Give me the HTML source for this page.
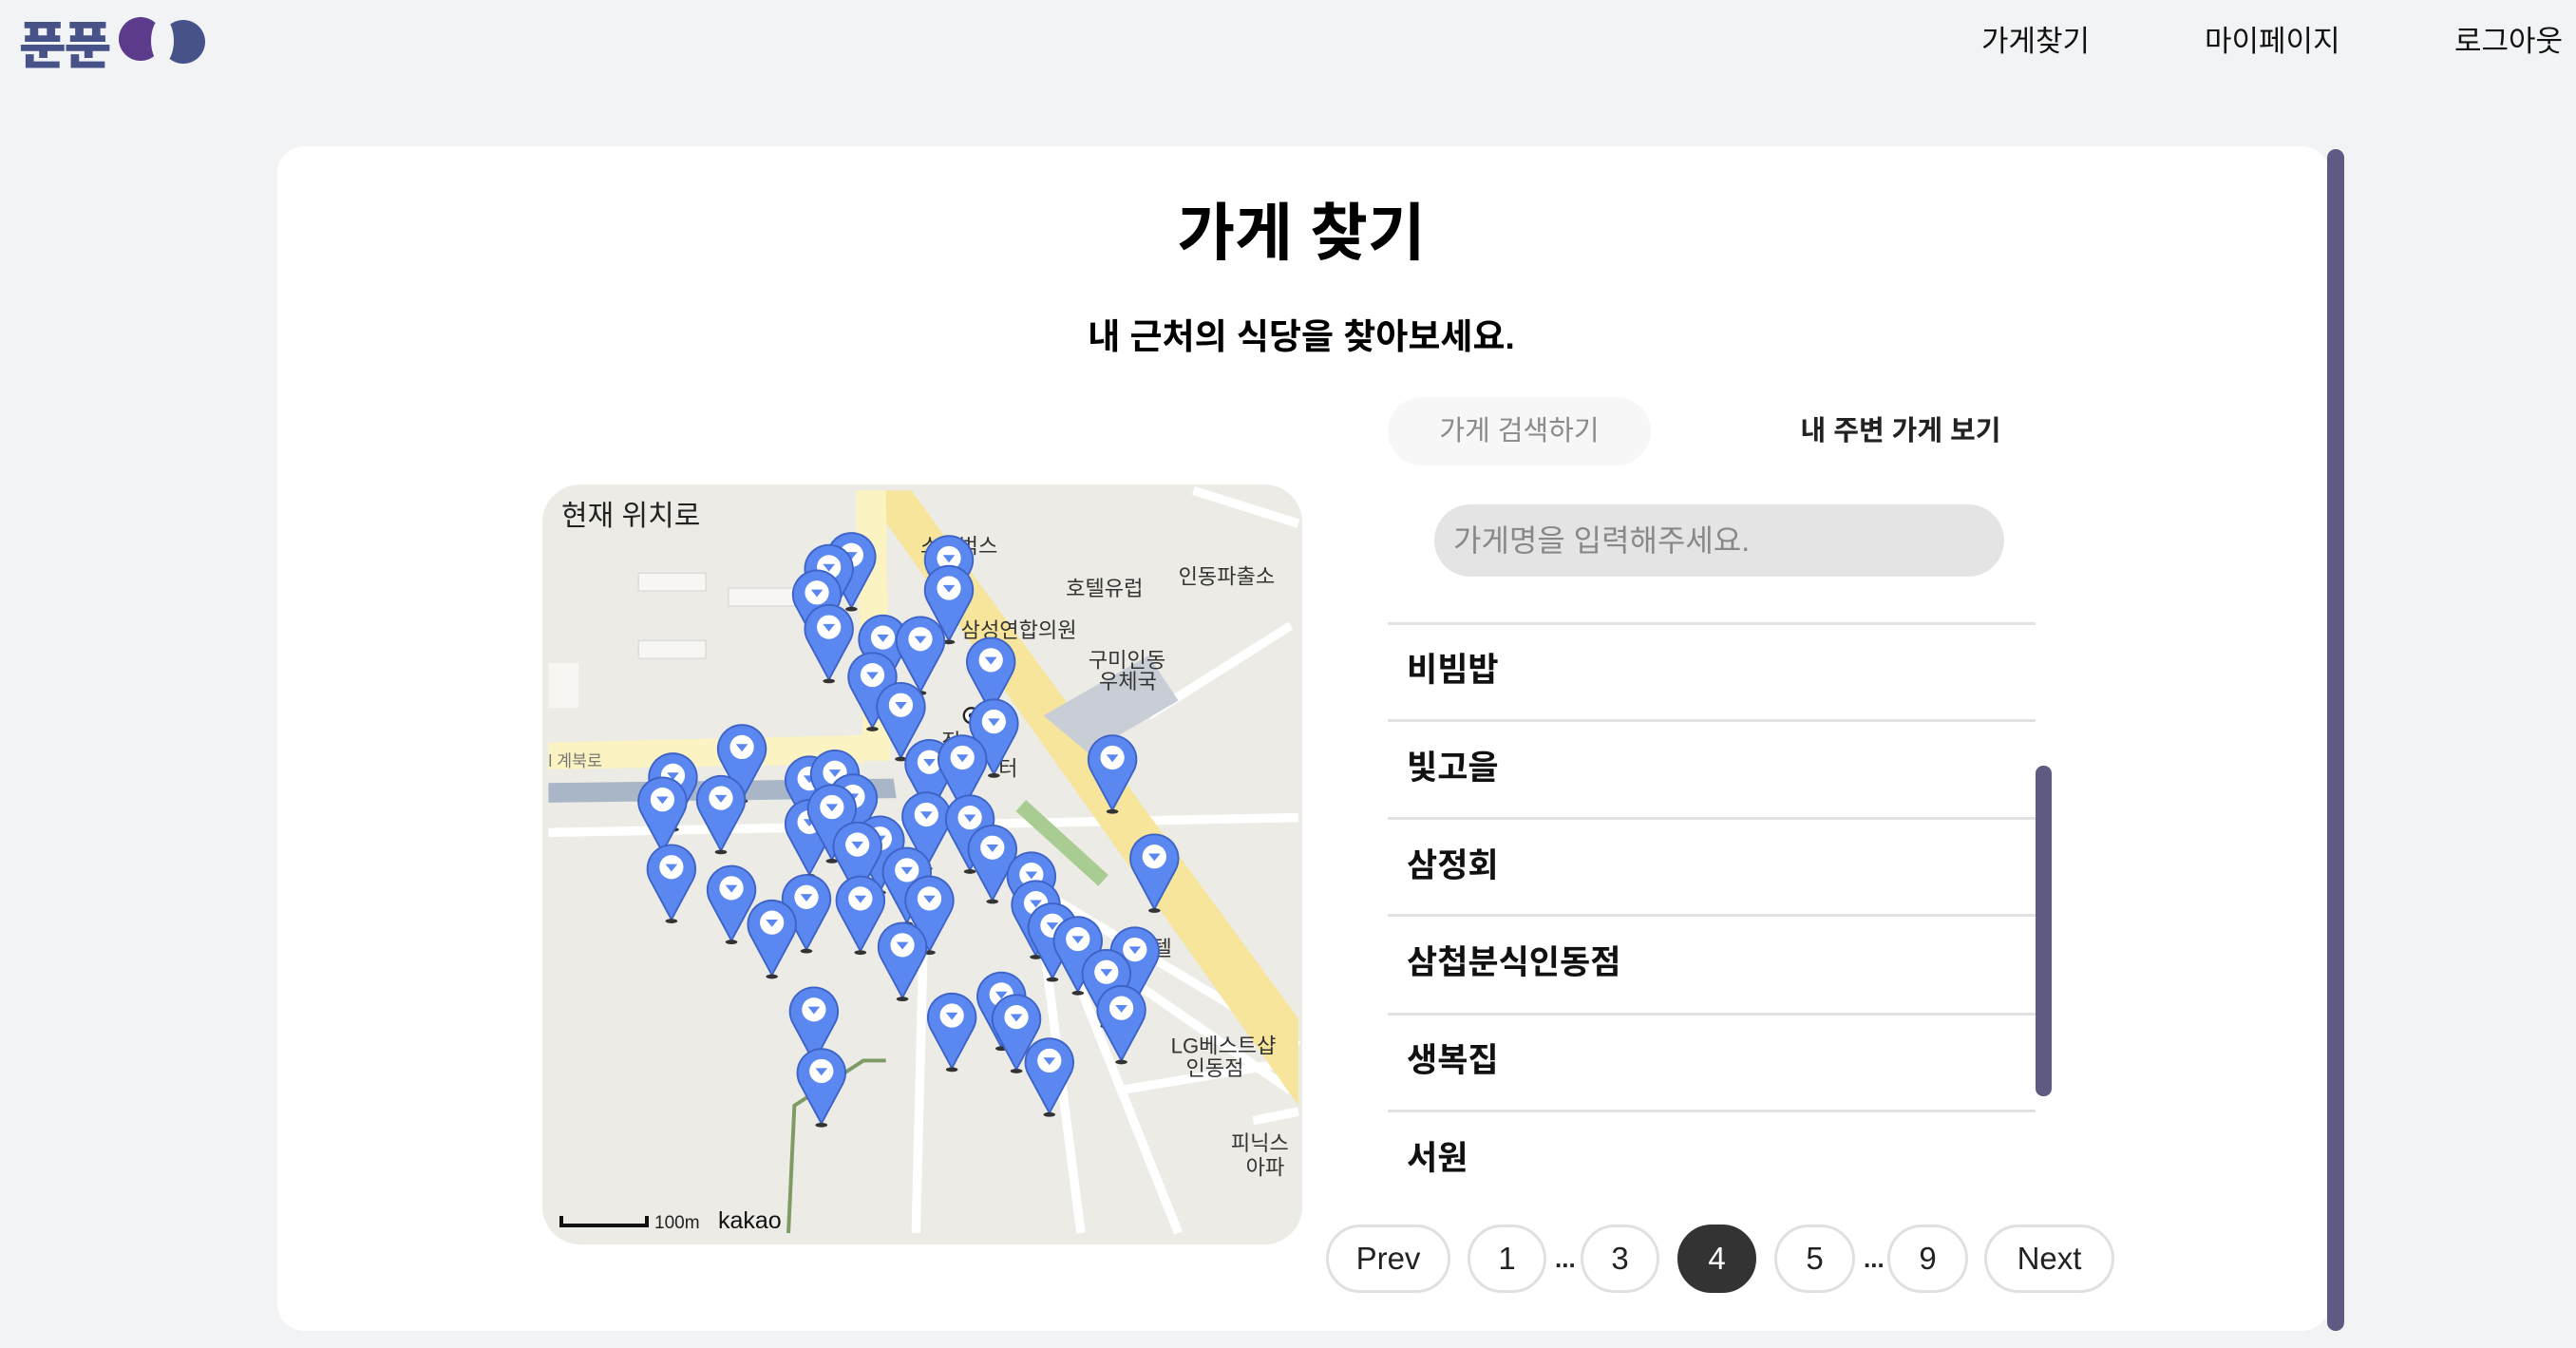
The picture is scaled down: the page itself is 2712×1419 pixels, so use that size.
<!DOCTYPE html>
<html><head><meta charset="utf-8"><style>
*{margin:0;padding:0;box-sizing:border-box}
html,body{overflow:hidden}
body{width:2712px;height:1419px;background:#f2f3f5;font-family:"Liberation Sans","Noto Sans CJK KR",sans-serif;position:relative;overflow:hidden;color:#000}
.abs{position:absolute}
.nav{font-size:31px;top:18px;color:#111}
.card{left:292px;top:154px;width:2160px;height:1247px;background:#fff;border-radius:28px}
.sb{left:2450px;top:157px;width:18px;height:1244px;background:#5e5b82;border-radius:9px}
h1{position:absolute;left:270px;width:2200px;top:192px;text-align:center;font-size:66px;font-weight:700}
.sub{left:270px;width:2200px;top:324px;text-align:center;font-size:37px;font-weight:700}
.tab1{left:1461px;top:418px;width:277px;height:72px;border-radius:36px;background:#f7f7f7;color:#8a8a8a;font-size:29px;line-height:72px;text-align:center}
.tab2{left:1862px;top:418px;width:278px;height:72px;font-size:29px;line-height:72px;text-align:center;font-weight:700;color:#222}
.inp{left:1510px;top:531px;width:600px;height:76px;border-radius:38px;background:#e4e4e4;color:#888;font-size:32px;line-height:76px;padding-left:20px}
.line{left:1461px;width:682px;height:3px;background:#e2e2e2}
.item{left:1481px;font-size:35px;font-weight:700;color:#111}
.isb{left:2143px;top:806px;width:17px;height:348px;background:#5e5b82;border-radius:8px}
.pg{top:1289px;height:72px;border:3px solid #e0e0e0;border-radius:36px;background:#fff;font-size:33px;line-height:66px;text-align:center;color:#222}
.dots{top:1310px;font-size:26px;font-weight:700;color:#222}
.map{left:571px;top:510px;width:800px;height:800px;border-radius:40px;overflow:hidden;background:#ecebe5}
</style></head><body>
<div class="abs" style="left:20px;top:4px;font-size:54px;font-weight:900;color:#475289;letter-spacing:-2px">푼푼</div>
<svg class="abs" style="left:124px;top:14px" width="92" height="56" viewBox="0 0 92 56">
<circle cx="24" cy="27" r="23" fill="#5c3a8c"/>
<circle cx="69" cy="30" r="23" fill="#475289"/>
<ellipse cx="47" cy="29" rx="12" ry="24" fill="#f2f3f5"/>
</svg>
<div class="abs nav" style="left:2086px">가게찾기</div>
<div class="abs nav" style="left:2321px">마이페이지</div>
<div class="abs nav" style="left:2584px">로그아웃</div>
<div class="abs card"></div>
<div class="abs sb"></div>
<h1>가게 찾기</h1>
<div class="abs sub">내 근처의 식당을 찾아보세요.</div>
<div class="abs tab1">가게 검색하기</div>
<div class="abs tab2">내 주변 가게 보기</div>
<div class="abs inp">가게명을 입력해주세요.</div>
<div class="abs line" style="top:655px"></div>
<div class="abs item" style="top:677px">비빔밥</div>
<div class="abs line" style="top:757px"></div>
<div class="abs item" style="top:780px">빛고을</div>
<div class="abs line" style="top:860px"></div>
<div class="abs item" style="top:883px">삼정회</div>
<div class="abs line" style="top:962px"></div>
<div class="abs item" style="top:985px">삼첩분식인동점</div>
<div class="abs line" style="top:1066px"></div>
<div class="abs item" style="top:1088px">생복집</div>
<div class="abs line" style="top:1168px"></div>
<div class="abs item" style="top:1191px">서원</div>
<div class="abs isb"></div>
<div class="abs pg" style="left:1396px;width:131px">Prev</div>
<div class="abs pg" style="left:1545px;width:83px">1</div>
<div class="abs dots" style="left:1637px">...</div>
<div class="abs pg" style="left:1664px;width:83px">3</div>
<div class="abs pg" style="left:1766px;width:83px;background:#333;color:#fff;border-color:#333">4</div>
<div class="abs pg" style="left:1868px;width:85px">5</div>
<div class="abs dots" style="left:1962px">...</div>
<div class="abs pg" style="left:1987px;width:85px">9</div>
<div class="abs pg" style="left:2089px;width:137px">Next</div>
<div class="abs map">
<svg width="800" height="800" viewBox="0 0 800 800" font-family="Liberation Sans,Noto Sans CJK KR,sans-serif">
<defs><g id="p"><path d="M-14 8 A16 16 0 1 1 14 8 L0 34Z" fill="#5b87f0" stroke="#3e63c6" stroke-width="1.2"/><circle cx="0" cy="-1" r="8" fill="#fff"/><path d="M-4 -3 L4 -3 L0 2Z" fill="#5b87f0"/><ellipse cx="0" cy="35" rx="4" ry="1.5" fill="#333"/></g></defs>
<rect width="800" height="800" fill="#ecebe5"/>
<g transform="translate(6.4,6.4) scale(1.579)">
<g stroke="#fff" stroke-width="6" fill="none">
<path d="M0 228 L500 218"/><path d="M300 250 L500 370"/><path d="M330 270 L420 495"/><path d="M330 300 L355 495"/><path d="M470 420 L500 414"/><path d="M400 150 L495 90"/><path d="M430 0 L500 22"/><path d="M380 400 L500 380"/><path d="M250 300 L245 495"/><path d="M350 300 L495 400"/>
</g>
<path d="M210 0 L242 0 L500 352 L500 410Z" fill="#f6e59a"/>
<path d="M0 168 L210 163 L210 182 L0 186Z" fill="#fbf3c2"/>
<path d="M205 0 L225 0 L228 180 L210 180Z" fill="#fbf3c2"/>
<path d="M0 195 L230 192 L232 205 L0 208Z" fill="#a9b6c8"/>
<path d="M315 210 L370 260" stroke="#a8cc91" stroke-width="10"/>
<path d="M330 150 L400 110 L420 140 L360 175Z" fill="#c9ced6"/>
<path d="M160 495 L164 410 L210 380 L225 380" stroke="#7d9b62" stroke-width="2.5" fill="none"/>
<rect x="60" y="55" width="45" height="12" fill="#f7f6f2" stroke="#ddd"/>
<rect x="120" y="65" width="45" height="12" fill="#f7f6f2" stroke="#ddd"/>
<rect x="60" y="100" width="45" height="12" fill="#f7f6f2" stroke="#ddd"/>
<rect x="0" y="115" width="20" height="30" fill="#f7f6f2"/>
<g font-size="14" fill="#333"><text x="248" y="42">스타벅스</text><text x="345" y="70">호텔유럽</text><text x="420" y="62">인동파출소</text><text x="275" y="98">삼성연합의원</text><text x="360" y="118">구미인동</text><text x="367" y="132">우체국</text><text x="415" y="375">LG베스트샵</text><text x="425" y="390">인동점</text><text x="455" y="440">피닉스</text><text x="465" y="456">아파</text><text x="0" y="184" font-size="11" fill="#777">l 계북로</text><text x="262" y="172">진</text><text x="300" y="190">터</text><text x="390" y="310">스텔</text></g>
<circle cx="282" cy="150" r="5" fill="#fff" stroke="#222" stroke-width="1.5"/><circle cx="282" cy="150" r="1.8" fill="#222"/>
<use href="#p" x="202" y="44"/><use href="#p" x="187" y="52"/><use href="#p" x="179" y="69"/><use href="#p" x="187" y="92"/><use href="#p" x="267" y="46"/><use href="#p" x="267" y="66"/><use href="#p" x="223" y="99"/><use href="#p" x="248" y="100"/><use href="#p" x="216" y="124"/><use href="#p" x="295" y="114"/><use href="#p" x="235" y="144"/><use href="#p" x="297" y="155"/><use href="#p" x="254" y="182"/><use href="#p" x="276" y="179"/><use href="#p" x="376" y="179"/><use href="#p" x="129" y="172"/><use href="#p" x="83" y="191"/><use href="#p" x="76" y="207"/><use href="#p" x="115" y="206"/><use href="#p" x="174" y="193"/><use href="#p" x="191" y="189"/><use href="#p" x="203" y="205"/><use href="#p" x="174" y="222"/><use href="#p" x="189" y="212"/><use href="#p" x="221" y="233"/><use href="#p" x="206" y="237"/><use href="#p" x="252" y="217"/><use href="#p" x="281" y="219"/><use href="#p" x="296" y="239"/><use href="#p" x="239" y="254"/><use href="#p" x="254" y="273"/><use href="#p" x="208" y="273"/><use href="#p" x="172" y="272"/><use href="#p" x="149" y="289"/><use href="#p" x="122" y="266"/><use href="#p" x="82" y="252"/><use href="#p" x="404" y="245"/><use href="#p" x="322" y="257"/><use href="#p" x="325" y="276"/><use href="#p" x="336" y="291"/><use href="#p" x="353" y="300"/><use href="#p" x="391" y="307"/><use href="#p" x="372" y="322"/><use href="#p" x="382" y="346"/><use href="#p" x="236" y="304"/><use href="#p" x="177" y="347"/><use href="#p" x="182" y="388"/><use href="#p" x="269" y="351"/><use href="#p" x="302" y="337"/><use href="#p" x="312" y="352"/><use href="#p" x="334" y="381"/>
</g>
<text x="20" y="43" font-size="30" fill="#222">현재 위치로</text>
<path d="M20 770 V780 H110 V770" stroke="#111" stroke-width="4" fill="none"/>
<text x="118" y="783" font-size="19" fill="#222">100m</text><text x="185" y="783" font-size="25" fill="#111">kakao</text>
</svg></div>
</body></html>
